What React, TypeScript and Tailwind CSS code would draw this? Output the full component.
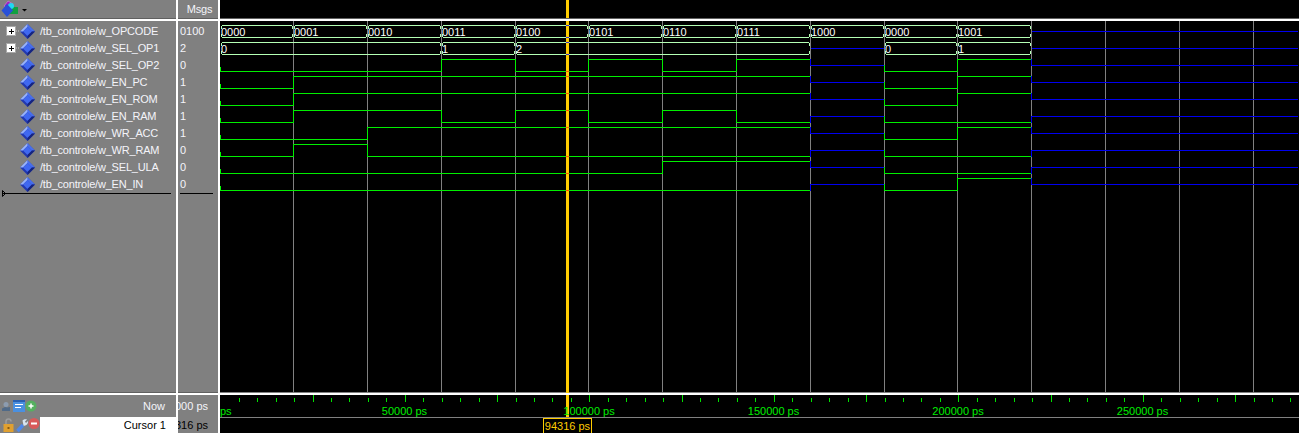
const GRID = [220, 293, 367, 441, 515, 588, 662, 736, 810, 884, 957, 1031, 1105, 1179, 1253]
const WAVE_END = 1298
const CURSOR = 566

// one char per segment between grid lines up to 1031, last one runs to the end
const signals = [
	{ name: 'w_SEL_OP2', msg: '0', bits: '00010101z01z' },
	{ name: 'w_EN_PC', msg: '1', bits: '01111111z01z' },
	{ name: 'w_EN_ROM', msg: '1', bits: '01111111z01z' },
	{ name: 'w_EN_RAM', msg: '1', bits: '01101010z00z' },
	{ name: 'w_WR_ACC', msg: '1', bits: '00111111z01z' },
	{ name: 'w_WR_RAM', msg: '0', bits: '01000000z00z' },
	{ name: 'w_SEL_ULA', msg: '0', bits: '00000011z00z' },
	{ name: 'w_EN_IN', msg: '0', bits: '00000000z01z' },
]

const buses = [
	{
		name: 'w_OPCODE',
		msg: '0100',
		top: 25,
		parts: [
			[220, 293, '0000'],
			[293, 367, '0001'],
			[367, 441, '0010'],
			[441, 515, '0011'],
			[515, 588, '0100'],
			[588, 662, '0101'],
			[662, 736, '0110'],
			[736, 810, '0111'],
			[810, 884, '1000'],
			[884, 957, '0000'],
			[957, 1031, '1001'],
		] as [number, number, string][],
		gaps: [[1031, WAVE_END]],
	},
	{
		name: 'w_SEL_OP1',
		msg: '2',
		top: 42,
		parts: [
			[220, 441, '0'],
			[441, 515, '1'],
			[515, 810, '2'],
			[884, 957, '0'],
			[957, 1031, '1'],
		] as [number, number, string][],
		gaps: [
			[810, 884],
			[1031, WAVE_END],
		],
	},
]

const segX = (i: number) => [GRID[i], i === 11 ? WAVE_END : GRID[i + 1]]

function SignalTrace({ row, bits }: { row: number; bits: string }) {
	const low = 71 + row * 17
	const yOf = (b: string) => (b === '1' ? low - 12 : b === '0' ? low : low - 6)
	return (
		<>
			<rect x={220} y={low - 4} width={1} height={4} fill="#00ff00" />
			{bits.split('').map((b, i) => {
				const [a, z] = segX(i)
				const y = yOf(b)
				const color = b === 'z' ? '#0000f0' : '#00ee00'
				const prev = i > 0 ? yOf(bits[i - 1]) : y
				return (
					<g key={i}>
						{prev !== y && <rect x={a} y={Math.min(prev, y)} width={1} height={Math.abs(prev - y) + 1} fill={color} />}
						<rect x={a} y={y} width={z - a + (i === 11 ? 0 : 1)} height={1} fill={color} />
					</g>
				)
			})}
			<rect x={CURSOR} y={yOf(bits[4])} width={3} height={1} fill="#ff5000" />
		</>
	)
}

function BusTrace({ bus }: { bus: (typeof buses)[number] }) {
	const { top, parts, gaps } = bus
	const bot = top + 12
	const c = '#b4ffb4'
	return (
		<>
			{parts.map(([a, z, label]) => (
				<g key={a} fill={c}>
					<rect x={a + 2} y={top} width={z - a - 3} height={1} />
					<rect x={a + 2} y={bot} width={z - a - 3} height={1} />
					<rect x={a + 1} y={top + 1} width={1} height={3} />
					<rect x={a + 1} y={bot - 3} width={1} height={3} />
					<rect x={z - 1} y={top + 1} width={1} height={3} />
					<rect x={z - 1} y={bot - 3} width={1} height={3} />
					<text x={a + 1} y={top + 11} fill="#ffffff" fontSize={11} fontFamily="'Liberation Sans', sans-serif">
						{label}
					</text>
				</g>
			))}
			{gaps.map(([a, z]) => (
				<rect key={a} x={a + 1} y={top + 6} width={z - a - 1} height={1} fill="#0000f0" />
			))}
			<rect x={CURSOR} y={top} width={3} height={1} fill="#4030c0" />
			<rect x={CURSOR} y={bot} width={3} height={1} fill="#4030c0" />
		</>
	)
}

function Waves() {
	return (
		<svg viewBox="220 21 1079 372" className="block w-[1079px] h-[372px] bg-black" shapeRendering="crispEdges">
			{GRID.slice(1).map((x) => (
				<rect key={x} x={x} y={21} width={1} height={371} fill="#808080" />
			))}
			<rect x={220} y={392} width={1079} height={1} fill="#808080" />
			<rect x={CURSOR} y={21} width={3} height={372} fill="#ffcc00" />
			{buses.map((b) => (
				<BusTrace key={b.name} bus={b} />
			))}
			{signals.map((s, i) => (
				<SignalTrace key={s.name} row={i} bits={s.bits} />
			))}
		</svg>
	)
}

function Ruler() {
	const ticks = Array.from({ length: 59 }, (_, i) => i + 1)
	const labels = ['50000 ps', '100000 ps', '150000 ps', '200000 ps', '250000 ps']
	return (
		<svg viewBox="220 395 1079 22" className="block w-[1079px] h-[22px] bg-black">
			{ticks.map((i) => {
				const x = Math.round(220.3 + 18.45 * i)
				const major = i % 5 === 0
				return <rect key={i} x={x} y={major ? 395 : 398} width={1} height={major ? 7 : 4} fill="#00e000" shapeRendering="crispEdges" />
			})}
			<rect x={CURSOR} y={395} width={3} height={22} fill="#ffcc00" shapeRendering="crispEdges" />
			<text x={220} y={415} fill="#00ee00" fontSize={11} fontFamily="'Liberation Sans', sans-serif">
				ps
			</text>
			{labels.map((l, i) => (
				<text key={l} x={220 + 184.5 * (i + 1)} y={415} textAnchor="middle" fill="#00ee00" fontSize={11} fontFamily="'Liberation Sans', sans-serif">
					{l}
				</text>
			))}
		</svg>
	)
}

function Diamond() {
	return (
		<svg width="15" height="15" viewBox="0 0 15 15" className="shrink-0">
			<path d="M7.5 0L15 7.5L7.5 15L0 7.5Z" fill="#2238b0" />
			<path d="M7.5 0L15 7.5H12L7.5 3Z" fill="#4a70ec" />
			<path d="M7.5 0L0 7.5L3 7.5L7.5 3Z" fill="#9ab4f8" />
			<path d="M7.5 3L12 7.5L7.5 12L3 7.5Z" fill="#4068f0" />
			<path d="M7.5 15L15 7.5H12L7.5 12Z" fill="#16247e" />
		</svg>
	)
}

function PlusBox() {
	return (
		<svg width="14" height="11" viewBox="0 0 14 11" className="shrink-0">
			<rect x="0.5" y="0.5" width="9" height="9" fill="#ffffff" stroke="#a8a8a8" />
			<path d="M2.5 5H7.5M5 2.5V7.5" stroke="#000000" strokeWidth="1" shapeRendering="crispEdges" />
			<path d="M10 5H14" stroke="#c8c8c8" strokeWidth="1" strokeDasharray="1 1" />
		</svg>
	)
}

function HeaderIcon() {
	return (
		<svg width="28" height="18" viewBox="0 0 28 18">
			<path d="M7 1L12 4L8 9L3 6Z" fill="#a020c0" stroke="#e090f0" strokeWidth="0.5" />
			<rect x="9" y="7" width="8" height="7" fill="#10a040" />
			<circle cx="10" cy="6" r="3" fill="#20d8f0" />
			<path d="M6 4L12 10.5L6 17L0.5 10.5Z" fill="#2850d8" />
			<path d="M21 9H26L23.5 11.5Z" fill="#000000" />
		</svg>
	)
}

function ToolIconsTop() {
	return (
		<svg width="36" height="14" viewBox="0 0 36 14">
			<path d="M1 12V9.5L4 8L6 8.5L9 8V12Z" fill="#506a88" />
			<circle cx="5" cy="5.5" r="2.5" fill="#8c9cb0" />
			<rect x="12" y="1" width="12" height="12" fill="#4a90e0" />
			<rect x="14" y="5" width="8" height="1" fill="#ffffff" />
			<rect x="14" y="8" width="6" height="1" fill="#ffffff" />
			<rect x="12" y="1" width="12" height="2" fill="#2a60b0" />
			<circle cx="30" cy="7" r="5.5" fill="#55b060" />
			<path d="M27.5 7H32.5M30 4.5V9.5" stroke="#ffffff" strokeWidth="1.5" />
		</svg>
	)
}

function ToolIconsBottom() {
	return (
		<svg width="40" height="16" viewBox="0 0 40 16">
			<path d="M6 7V4.5C6 3 7 2 8.5 2S11 3 11 4.5" fill="none" stroke="#9c9c9c" strokeWidth="1.5" />
			<rect x="3.5" y="7" width="10" height="8" fill="#e0a030" />
			<rect x="7.5" y="10" width="2" height="2" fill="#8a5a10" />
			<path d="M17.5 14L23 8" stroke="#4f88e8" strokeWidth="3.5" />
			<path d="M22.5 3.5C24 1.8 26 2 27 2.5L25 4.5L26 6L28 4C28.5 6.5 26 9.5 23.5 8.5Z" fill="#d8e4f0" />
			<circle cx="34" cy="6.5" r="5.5" fill="#d85a5a" />
			<rect x="31" y="5.5" width="6" height="2" fill="#ffffff" />
		</svg>
	)
}

export default function App() {
	const rows = [...buses.map((b) => ({ name: b.name, msg: b.msg, bus: true })), ...signals.map((s) => ({ name: s.name, msg: s.msg, bus: false }))]
	return (
		<div className="w-[1302px] h-[433px] overflow-hidden flex gap-[2px] bg-white font-['Liberation_Sans',sans-serif] text-[11px]">
			{/* names */}
			<div className="w-[176px] flex flex-col">
				<div className="h-[19px] bg-[#808080] border-b border-[#606060] flex items-center pl-[1px]">
					<HeaderIcon />
				</div>
				<div className="h-[2px]" />
				<div className="h-[372px] bg-[#808080] border-b border-[#606060] pt-[2px] relative">
					{rows.map((r) => (
						<div key={r.name} className="h-[17px] flex items-center pl-[6px] text-[#f4f4fa] tracking-[-0.2px]">
							<div className="w-[14px] shrink-0">{r.bus && <PlusBox />}</div>
							<Diamond />
							<span className="ml-[5px] whitespace-nowrap">/tb_controle/{r.name}</span>
						</div>
					))}
					<div className="ml-[2px] w-[169px] h-px bg-black" />
					<svg width="4" height="7" viewBox="0 0 4 7" className="absolute left-[2px] top-[169px]">
						<path d="M0.5 0.5L3.5 3.5L0.5 6.5Z" fill="none" stroke="#000000" />
					</svg>
				</div>
				<div className="h-[2px]" />
				<div className="h-[22px] bg-[#808080] flex items-center justify-between pl-[1px] pr-[11px] text-[#f4f4fa]">
					<ToolIconsTop />
					<span>Now</span>
				</div>
				<div className="h-[16px] flex">
					<div className="w-[40px] bg-[#808080] flex items-center">
						<ToolIconsBottom />
					</div>
					<div className="flex-1 flex items-center justify-end pr-[10px] text-black">Cursor 1</div>
				</div>
			</div>
			{/* values */}
			<div className="w-[40px] flex flex-col">
				<div className="h-[19px] bg-[#808080] border-b border-[#606060] flex items-center justify-center pl-[3px] pt-[1px] text-[#f4f4fa] tracking-[-0.2px]">Msgs</div>
				<div className="h-[2px]" />
				<div className="h-[372px] bg-[#808080] border-b border-[#606060] pt-[2px]">
					{rows.map((r) => (
						<div key={r.name} className="h-[17px] flex items-center pl-[2px] text-[#f4f4fa]">
							{r.msg}
						</div>
					))}
					<div className="ml-[2px] w-[33px] h-px bg-black" />
				</div>
				<div className="h-[2px]" />
				<div className="h-[22px] bg-[#808080] flex items-center justify-end overflow-hidden pr-[10px] text-[#f4f4fa] whitespace-nowrap">
					<span className="shrink-0">000 ps</span>
				</div>
				<div className="h-[16px] bg-[#808080] flex items-center justify-end overflow-hidden pr-[10px] text-black whitespace-nowrap">
					<span className="shrink-0">316 ps</span>
				</div>
			</div>
			{/* wave window */}
			<div className="w-[1079px] flex flex-col relative">
				<div className="h-[19px] bg-black border-b border-[#606060] relative">
					<div className="absolute left-[346px] top-0 w-[3px] h-[18px] bg-[#ffcc00]" />
				</div>
				<div className="h-[2px]" />
				<Waves />
				<div className="h-[2px]" />
				<Ruler />
				<div className="h-[16px] bg-black border-t border-[#808080]" />
				<div className="absolute left-[323px] top-[418px] w-[49px] h-[15px] border border-b-0 border-[#ffcc00] bg-black text-[#ffcc00] flex items-center justify-center whitespace-nowrap">
					94316 ps
				</div>
			</div>
		</div>
	)
}
